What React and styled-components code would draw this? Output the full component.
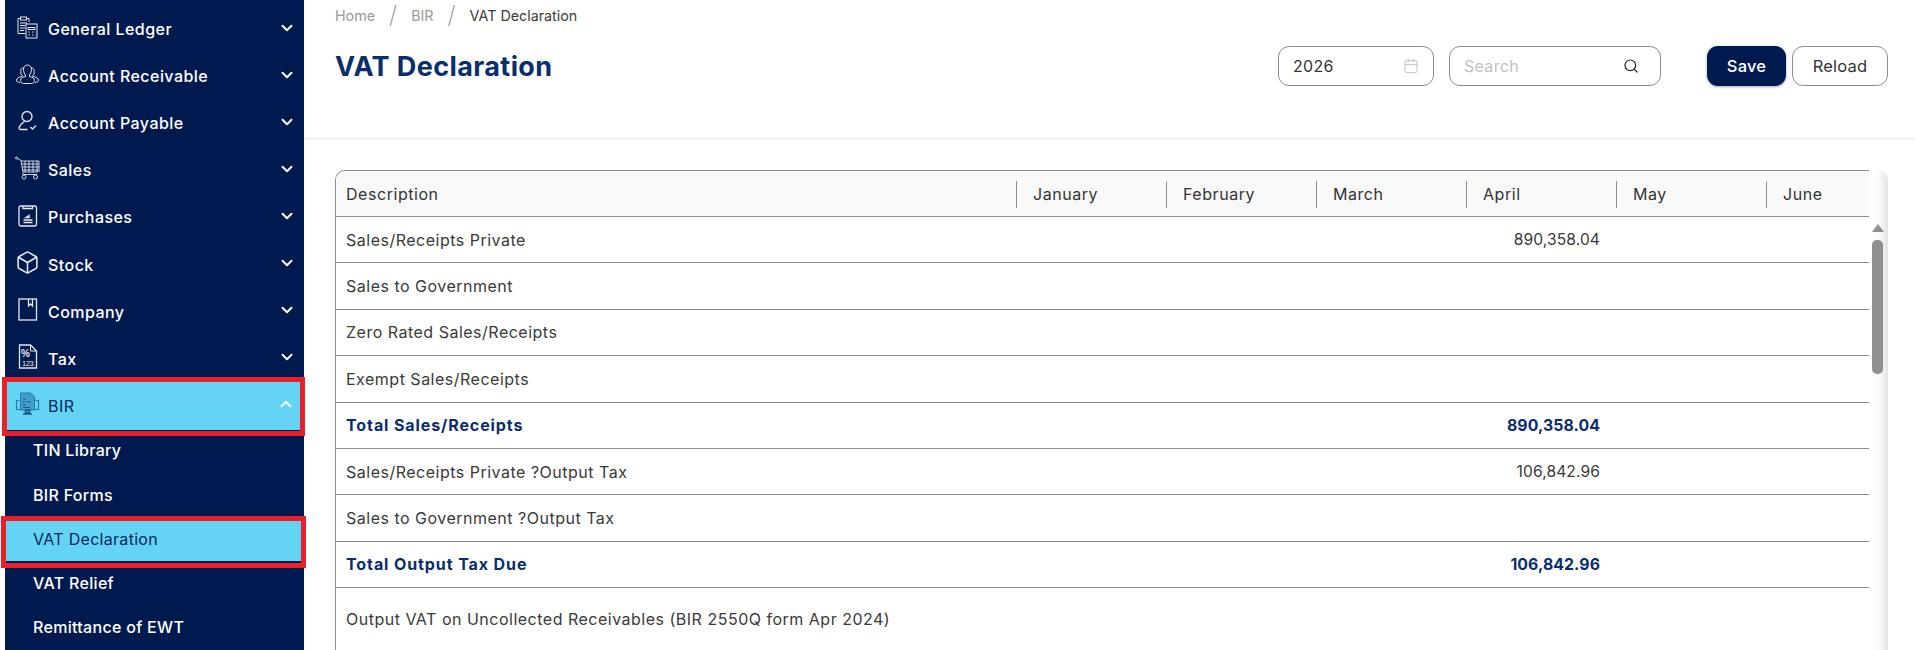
import styled, { createGlobalStyle } from "styled-components";
import { ChevronDown, ChevronUp, Calendar, Search, Box } from "lucide-react";

const GlobalStyle = createGlobalStyle`
  html, body {
    margin: 0;
    padding: 0;
    background: #fff;
    overflow: hidden;
  }

  body {
    font-family: Inter, "Open Sans", sans-serif;
    color: #333;
  }
`;

const Page = styled.div`
  display: flex;
  width: 1915px;
  height: 650px;
  padding-left: 5px;
  box-sizing: border-box;
  overflow: hidden;
`;

const Sidebar = styled.aside`
  flex: 0 0 299px;
  background: #001a4f;
  padding-top: 5.5px;
  box-sizing: border-box;
`;

const MenuRow = styled.div`
  display: flex;
  align-items: center;
  height: ${(p) => (p.$open ? "48.5px" : "47.1px")};
  margin: ${(p) => (p.$open ? "0 4px 0 2px" : "0")};
  padding: ${(p) => (p.$open ? "0 5px 2px 8px" : "0 8px 0 10px")};
  box-sizing: border-box;
  color: ${(p) => (p.$open ? "#06265f" : "#fff")};
  background: ${(p) => (p.$open ? "#63d4f4" : "transparent")};
  box-shadow: ${(p) => (p.$open ? "0 0 0 5px #e8202a, inset 0 -1px 0 #001a4f" : "none")};
  font-size: 16px;
  font-weight: ${(p) => (p.$open ? 400 : 500)};
  letter-spacing: 0.45px;

  svg.chev {
    color: #fff;
    margin-top: -3px;
  }
`;

const IconSlot = styled.span`
  display: flex;
  align-items: center;
  justify-content: center;
  flex: 0 0 25px;
  height: 25px;
  margin-right: 8px;
  margin-top: -4px;
  opacity: 0.9;
`;

const MenuLabel = styled.span`
  flex: 1;
`;

const SubList = styled.div`
  display: flex;
  flex-direction: column;
  gap: 2.3px;
  padding-top: 1.5px;
`;

const SubRow = styled.div`
  display: flex;
  align-items: center;
  height: 42px;
  margin: ${(p) => (p.$active ? "0 3px 0 1px" : "0")};
  padding: ${(p) => (p.$active ? "0 0 6px 27px" : "0 0 6px 28px")};
  box-sizing: border-box;
  color: ${(p) => (p.$active ? "#06265f" : "#fff")};
  background: ${(p) => (p.$active ? "#63d4f4" : "transparent")};
  box-shadow: ${(p) => (p.$active ? "0 0 0 5px #e8202a, inset 0 -2px 0 #001a4f" : "none")};
  font-size: 16px;
  font-weight: ${(p) => (p.$active ? 400 : 500)};
  letter-spacing: 0.3px;
`;

const Main = styled.main`
  flex: 1;
  min-width: 0;
  display: flex;
  flex-direction: column;
`;

const TopBar = styled.header`
  flex: 0 0 auto;
  height: 131px;
  padding: 6px 27px 0 31px;
  border-bottom: 3px solid #f3f3f3;
`;

const Breadcrumb = styled.nav`
  display: flex;
  align-items: center;
  height: 18px;
  font-size: 14.3px;
  color: #9a9a9a;
`;

const Slash = styled.span`
  margin: 0 14px;
  font-size: 24px;
  line-height: 18px;
  font-weight: 200;
  color: #8f8f8f;
`;

const Crumb = styled.span`
  color: ${(p) => (p.$current ? "#3c3c3c" : "#9a9a9a")};
`;

const TitleRow = styled.div`
  display: flex;
  align-items: flex-start;
  margin-top: 22px;
`;

const Title = styled.h1`
  flex: 1;
  margin: 0;
  font-size: 27px;
  line-height: 42px;
  font-weight: 700;
  letter-spacing: 0.4px;
  color: #0a2d6e;
`;

const InputBox = styled.div`
  display: flex;
  align-items: center;
  width: ${(p) => p.$width}px;
  height: 40px;
  margin-right: ${(p) => p.$gap}px;
  padding: 0 ${(p) => p.$pr}px 0 14px;
  box-sizing: border-box;
  border: 1px solid #8e8e8e;
  border-radius: 11px;
  font-size: 16px;
  color: #333;
`;

const InputText = styled.span`
  flex: 1;
  letter-spacing: 0.3px;
  color: ${(p) => (p.$placeholder ? "#c2c2c2" : "#333")};
`;

const Button = styled.button`
  width: ${(p) => p.$width}px;
  height: 40px;
  margin-left: ${(p) => p.$gap}px;
  padding: 0;
  border-radius: 11px;
  border: ${(p) => (p.$primary ? "0" : "1px solid #8e8e8e")};
  background: ${(p) => (p.$primary ? "#001a4f" : "#fff")};
  color: ${(p) => (p.$primary ? "#fff" : "#333")};
  box-shadow: ${(p) => (p.$primary ? "0 1px 3px rgba(0,0,0,.35)" : "none")};
  font-family: inherit;
  font-size: 16.5px;
  letter-spacing: 0.2px;
  font-weight: ${(p) => (p.$primary ? 500 : 400)};
`;

const Content = styled.section`
  flex: 1;
  min-height: 0;
  padding: 30px 27px 0 31px;
`;

const TableCard = styled.div`
  display: flex;
  height: 100%;
`;

const TableClip = styled.div`
  flex: 1;
  min-width: 0;
  overflow: hidden;
  border-left: 1px solid #8e8e8e;
  border-top: 1px solid #8e8e8e;
  border-top-left-radius: 10px;
  box-sizing: border-box;
`;

const Table = styled.table`
  width: 1580px;
  table-layout: fixed;
  border-collapse: separate;
  border-spacing: 0;
`;

const HeadCell = styled.th`
  position: relative;
  height: 45px;
  padding: 0 0 0 ${(p) => (p.$first ? "10px" : "17px")};
  background: #f9f9f9;
  border-bottom: 1px solid #8e8e8e;
  text-align: left;
  font-size: 16px;
  font-weight: 400;
  letter-spacing: 0.55px;
  color: #333;

  &::before {
    content: ${(p) => (p.$first ? "none" : '""')};
    position: absolute;
    left: 0;
    top: 10px;
    height: 27px;
    width: 1px;
    background: #8e8e8e;
  }
`;

const Cell = styled.td`
  height: 45.4px;
  padding: 0 0 0 10px;
  border-bottom: 1px solid #8e8e8e;
  font-size: 16px;
  font-weight: ${(p) => (p.$total ? 700 : 400)};
  letter-spacing: ${(p) => (p.$total ? "0.9px" : "0.5px")};
  color: ${(p) => (p.$total ? "#0a2d6e" : "#3a3a3a")};
  white-space: nowrap;
`;

const TallCell = styled(Cell)`
  height: 61.5px;
`;

const NumberCell = styled(Cell)`
  padding: 0 16px 0 0;
  text-align: right;
  font-size: ${(p) => (p.$total ? "15.8px" : "15.6px")};
  letter-spacing: 0.1px;
`;

const ScrollTrack = styled.div`
  flex: 0 0 19px;
  display: flex;
  flex-direction: column;
  align-items: center;
  padding: 54px 2px 0 0;
  box-sizing: border-box;
  border-top-right-radius: 10px;
  background: linear-gradient(to right, #fff 0%, #fbfbfb 50%, #e2e2e2 100%);
`;

const ScrollArrow = styled.div`
  width: 0;
  height: 0;
  border-left: 6px solid transparent;
  border-right: 6px solid transparent;
  border-bottom: 8px solid #8f8f8f;
  margin-bottom: 8px;
`;

const ScrollThumb = styled.div`
  width: 11px;
  height: 134px;
  border-radius: 5px;
  background: #8f8f8f;
`;

const GeneralLedgerIcon = () => (
  <svg width="25" height="25" viewBox="0 0 25 25" fill="none" stroke="currentColor" strokeWidth="1">
    <path d="M14 7V3.5h-2.5M5.5 3.5H3v15h7" />
    <rect x="5.5" y="2" width="6" height="3" />
    <path d="M5 8h7M5 10.5h5M5 13h5M5 15.5h4" />
    <rect x="11" y="9" width="11" height="14" />
    <path d="M13 12.5h7v2h-7zM13.5 17h1.5M17 17h1.5M20 17h.5M13.5 20h1.5M17 20h1.5M20 20h.5" />
  </svg>
);

const ReceivableIcon = () => (
  <svg width="25" height="25" viewBox="0 0 25 25" fill="none" stroke="currentColor" strokeWidth="1">
    <path d="M8 14.5c-2-1.5-2.5-3-2-5 -1-2 1-4 3-3.5" />
    <path d="M7 14.5c-3 .5-5.5 2-5.5 3.5 0 1.500 1.500 2.500 3.500 2.500" />
    <path d="M17 14.500c2-1.500 2.500-3 2-5 1-2-1-4-3-3.500" />
    <path d="M18 14.500c3 .5 5.500 2 5.500 3.500 0 1.500-1.500 2.500-3.500 2.500" />
    <path d="M12.500 3c-2.500 0-4 2-4 4.500 0 2.500 1 4.500 2 5.500v1.500c-2.500.5-5 1.500-5 4 0 1.500 1 3 3 3h8c2 0 3-1.500 3-3 0-2.500-2.500-3.500-5-4V13c1-1 2-3 2-5.500S15 3 12.500 3z" />
  </svg>
);

const PayableIcon = () => (
  <svg width="25" height="25" viewBox="0 0 25 25" fill="none" stroke="currentColor" strokeWidth="1.300">
    <circle cx="12" cy="7.500" r="5" />
    <path d="M9.500 12.500c-2.500 1.500-4.500 3.500-5.500 6.500 0 .7.500 1.500 1.500 1.500h7" />
    <path d="M15.500 18l2 2 3.500-3.500" />
  </svg>
);

const SalesIcon = () => (
  <svg width="25" height="25" viewBox="0 0 25 25" fill="none" stroke="currentColor" strokeWidth="0.9">
    <circle cx="1.500" cy="2" r="1" />
    <path d="M2.500 2.500L6 4.500l2 11.500h15" />
    <path d="M6 5h18v11M10 5v11M14 5v11M18 5v11M22 5v11M6.500 8h17M7 11h17M7.500 14h16" />
    <path d="M8 16.500v2h14" />
    <circle cx="9" cy="21" r="2" />
    <circle cx="20.500" cy="21" r="2" />
  </svg>
);

const PurchasesIcon = () => (
  <svg width="25" height="25" viewBox="0 0 25 25" fill="none" stroke="currentColor" strokeWidth="1.300">
    <rect x="4" y="3" width="17.500" height="20" rx="1.800" />
    <path d="M8 3v2.500h9.500V3" />
    <path d="M8.500 17h9M8.500 19.500h9M11 14.500l3-2v2z" />
  </svg>
);

const CompanyIcon = () => (
  <svg width="25" height="25" viewBox="0 0 25 25" fill="none" stroke="currentColor" strokeWidth="1.300">
    <rect x="4" y="2" width="17.500" height="21" />
    <path d="M13.500 2v7l2-2 2 2V2" />
  </svg>
);

const TaxIcon = () => (
  <svg width="25" height="25" viewBox="0 0 25 25" fill="none">
    <path d="M4.500 1h11L21.500 7v17h-17z" stroke="currentColor" strokeWidth="1.300" />
    <path d="M15.500 1v6h6" stroke="currentColor" strokeWidth="1" />
    <text x="6" y="12.500" fontFamily="Liberation Sans, sans-serif" fontSize="10" fontWeight="700" fill="currentColor">%</text>
    <text x="7" y="21.500" fontFamily="Liberation Sans, sans-serif" fontSize="7.500" fill="currentColor" textLength="12">123</text>
  </svg>
);

const BirIcon = () => (
  <svg width="25" height="25" viewBox="0 0 25 25" fill="none">
    <path d="M1.500 9.500h3M20.500 9.500h3v9h-22v-9" stroke="#1f6f9e" strokeWidth="1.200" />
    <path d="M5.500 2h10l4 4v13h-14z" fill="#3f9ac6" stroke="#1f6f9e" strokeWidth="1" />
    <path d="M8 8h3M8 11h2M12 11h4M8 14h3M8 16.500h7" stroke="#0e4d7a" strokeWidth="1" />
    <path d="M10.500 19h4v2.500h-4zM8 23h9" stroke="#0e4d7a" strokeWidth="1.500" />
  </svg>
);

const menuItems = [
  { label: "General Ledger", icon: <GeneralLedgerIcon /> },
  { label: "Account Receivable", icon: <ReceivableIcon /> },
  { label: "Account Payable", icon: <PayableIcon /> },
  { label: "Sales", icon: <SalesIcon /> },
  { label: "Purchases", icon: <PurchasesIcon /> },
  { label: "Stock", icon: <Box size={25} strokeWidth={1.5} /> },
  { label: "Company", icon: <CompanyIcon /> },
  { label: "Tax", icon: <TaxIcon /> },
];

const subItems = ["TIN Library", "BIR Forms", "VAT Declaration", "VAT Relief", "Remittance of EWT"];

const months = ["January", "February", "March", "April", "May", "June"];

const rows = [
  { name: "Sales/Receipts Private", april: "890,358.04" },
  { name: "Sales to Government" },
  { name: "Zero Rated Sales/Receipts" },
  { name: "Exempt Sales/Receipts" },
  { name: "Total Sales/Receipts", april: "890,358.04", total: true },
  { name: "Sales/Receipts Private ?Output Tax", april: "106,842.96" },
  { name: "Sales to Government ?Output Tax" },
  { name: "Total Output Tax Due", april: "106,842.96", total: true },
  { name: "Output VAT on Uncollected Receivables (BIR 2550Q form Apr 2024)", tall: true },
];

function App() {
  return (
    <>
      <GlobalStyle />
      <Page>
        <Sidebar>
          {menuItems.map((item) => (
            <MenuRow key={item.label}>
              <IconSlot>{item.icon}</IconSlot>
              <MenuLabel>{item.label}</MenuLabel>
              <ChevronDown className="chev" size={18} strokeWidth={2.6} />
            </MenuRow>
          ))}
          <MenuRow $open>
            <IconSlot>
              <BirIcon />
            </IconSlot>
            <MenuLabel>BIR</MenuLabel>
            <ChevronUp className="chev" size={18} strokeWidth={2.6} />
          </MenuRow>
          <SubList>
            {subItems.map((item) => (
              <SubRow key={item} $active={item === "VAT Declaration"}>
                {item}
              </SubRow>
            ))}
          </SubList>
        </Sidebar>

        <Main>
          <TopBar>
            <Breadcrumb>
              <Crumb>Home</Crumb>
              <Slash>/</Slash>
              <Crumb>BIR</Crumb>
              <Slash>/</Slash>
              <Crumb $current>VAT Declaration</Crumb>
            </Breadcrumb>
            <TitleRow>
              <Title>VAT Declaration</Title>
              <InputBox $width={156} $gap={15} $pr={14}>
                <InputText>2026</InputText>
                <Calendar size={16} color="#c4c4c4" strokeWidth={1.5} />
              </InputBox>
              <InputBox $width={212} $gap={46} $pr={21}>
                <InputText $placeholder>Search</InputText>
                <Search size={16} color="#222" strokeWidth={1.8} />
              </InputBox>
              <Button $primary $width={79}>Save</Button>
              <Button $width={96} $gap={6}>Reload</Button>
            </TitleRow>
          </TopBar>

          <Content>
            <TableCard>
              <TableClip>
                <Table>
                  <colgroup>
                    <col style={{ width: 680 }} />
                    {months.map((m) => (
                      <col key={m} style={{ width: 150 }} />
                    ))}
                  </colgroup>
                  <thead>
                    <tr>
                      <HeadCell $first>Description</HeadCell>
                      {months.map((m) => (
                        <HeadCell key={m}>{m}</HeadCell>
                      ))}
                    </tr>
                  </thead>
                  <tbody>
                    {rows.map((row) => {
                      const RowCell = row.tall ? TallCell : Cell;
                      return (
                        <tr key={row.name}>
                          <RowCell $total={row.total}>{row.name}</RowCell>
                          {months.map((m) => (
                            <NumberCell key={m} $total={row.total}>
                              {m === "April" ? row.april : ""}
                            </NumberCell>
                          ))}
                        </tr>
                      );
                    })}
                  </tbody>
                </Table>
              </TableClip>
              <ScrollTrack>
                <ScrollArrow />
                <ScrollThumb />
              </ScrollTrack>
            </TableCard>
          </Content>
        </Main>
      </Page>
    </>
  );
}

export default App;
